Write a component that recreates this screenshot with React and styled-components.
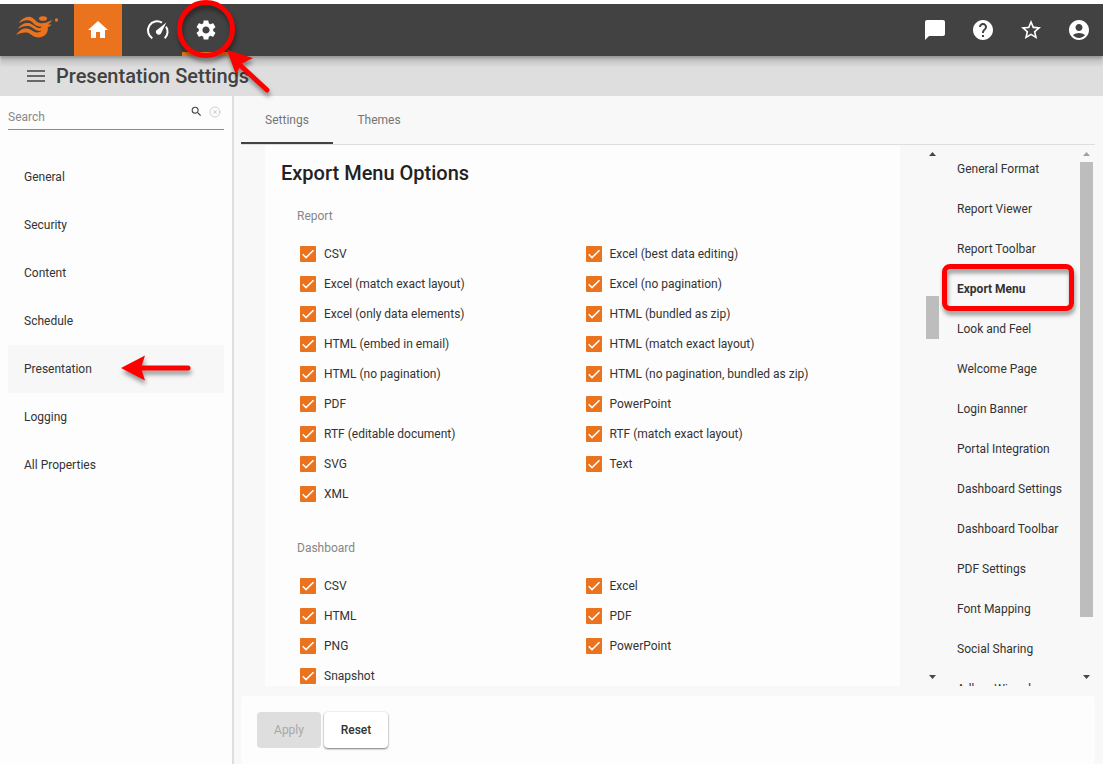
import React from "react";
import styled, { createGlobalStyle, css } from "styled-components";
import {
  MdHome, MdSettings, MdChatBubble, MdHelp, MdStarBorder, MdAccountCircle, MdMenu, MdSearch,
} from "react-icons/md";
import { CircleX } from "lucide-react";

const GlobalStyle = createGlobalStyle`
  *, *::before, *::after { box-sizing: border-box; }
  body {
    margin: 0;
    background: #f8f8f8;
    color: #333;
    font-family: Roboto, "Liberation Sans", sans-serif;
    font-size: 12px;
    line-height: 16px;
  }
  button, input { font: inherit; color: inherit; }
  button { border: 0; padding: 0; background: none; cursor: pointer; }
  ul { list-style: none; margin: 0; padding: 0; }
  h1, h2, h3 { margin: 0; font-weight: 500; }
  a { color: inherit; text-decoration: none; }
`;

const Page = styled.div`
  display: flex;
  flex-direction: column;
  height: 100vh;
  border-top: 4px solid #fff;
`;

const TopBar = styled.header`
  position: relative;
  z-index: 1;
  display: flex;
  flex: none;
  height: 52px;
  background: #424242;
  color: #fff;
  box-shadow: 0 2px 2px rgba(0, 0, 0, 0.14), 0 4px 3px rgba(0, 0, 0, 0.12), 0 9px 3px rgba(0, 0, 0, 0.08);
`;

const Brand = styled.a`
  display: flex;
  align-items: center;
  width: 74px;
  padding: 0 0 8px 16px;
`;

const BarLink = styled.a`
  position: relative;
  display: grid;
  place-items: center;
  width: 48px;
  font-size: 24px;
  ${(p) => p.$home && css`
    margin-right: 12px;
    background: #eb731d;
  `}
  ${(p) => p.$current && css`box-shadow: inset 0 -4px #eb731d;`}
`;

const BarActions = styled.div`
  display: flex;
  margin-left: auto;
`;

const BarButton = styled.button`
  display: grid;
  place-items: center;
  width: 48px;
  font-size: 24px;
`;

const TitleBar = styled.div`
  display: flex;
  flex: none;
  align-items: center;
  gap: 8px;
  height: 40px;
  padding: 0 24px;
  background: #dedede;
  color: #424242;
`;

const MenuButton = styled.button`
  display: flex;
  color: #686868;
  font-size: 24px;
`;

const PageTitle = styled.h1`
  font-size: 20px;
  line-height: 24px;
`;

const Body = styled.div`
  display: flex;
  flex: 1;
  min-height: 0;
`;

const Sidebar = styled.aside`
  flex: none;
  width: 234px;
  padding: 0 8px;
  background: #fdfdfd;
  border-right: 2px solid #dedede;
`;

const SearchBox = styled.label`
  display: flex;
  align-items: center;
  gap: 6px;
  height: 34px;
  padding-right: 3px;
  border-bottom: 1px solid #8a8a8a;
`;

const SearchInput = styled.input`
  flex: 1;
  min-width: 0;
  height: 16px;
  margin-top: 8px;
  padding: 0;
  border: 0;
  outline: 0;
  background: none;
  &::placeholder { color: #8a8a8a; opacity: 1; }
`;

const SearchAction = styled.button`
  display: flex;
  margin-bottom: 2px;
  color: ${(p) => (p.$muted ? "#bdbdbd" : "#424242")};
`;

const SideList = styled.ul`
  margin-top: 23px;
`;

const SideLink = styled.a`
  position: relative;
  display: flex;
  align-items: center;
  height: 48px;
  padding: 0 16px;
  background: ${(p) => (p.$current ? "#f7f7f7" : "none")};
`;

const Main = styled.main`
  display: flex;
  flex: 1;
  flex-direction: column;
  min-width: 0;
  padding: 0 8px 0 7px;
`;

const Tabs = styled.div`
  display: flex;
  flex: none;
  height: 49px;
  border-bottom: 1px solid #dedede;
`;

const Tab = styled.button`
  width: 92px;
  height: 48px;
  color: #757575;
  box-shadow: ${(p) => (p.$current ? "inset 0 -2px #424242" : "none")};
`;

const Content = styled.div`
  display: flex;
  flex: 1;
  min-height: 0;
  padding-right: 2px;
`;

const Panel = styled.section`
  flex: 1;
  min-width: 0;
  margin: 0 26px 0 24px;
  padding: 16px;
  overflow: hidden;
  border-radius: 4px 4px 0 0;
  background: #fdfdfd;
`;

const PanelTitle = styled.h2`
  font-size: 20px;
  line-height: 24px;
  color: #222;
`;

const Group = styled.fieldset`
  margin: 0;
  padding: 23px 16px 8px;
  border: 0;
  min-width: 0;
`;

const GroupTitle = styled.legend`
  float: left;
  width: 100%;
  margin-bottom: 15px;
  padding: 0;
  color: #868686;
`;

const Options = styled.div`
  clear: both;
  display: grid;
  grid-template-columns: 1fr 1fr;
`;

const Option = styled.label`
  display: flex;
  align-items: center;
  gap: 8px;
  height: 30px;
  padding-left: 3px;
`;

const TickFrame = styled.span`
  display: grid;
  width: 16px;
  height: 16px;
  > * { grid-area: 1 / 1; }
  svg { pointer-events: none; visibility: hidden; }
  input:checked + svg { visibility: visible; }
`;

const TickInput = styled.input`
  appearance: none;
  width: 16px;
  height: 16px;
  margin: 0;
  border: 2px solid #757575;
  border-radius: 1px;
  &:checked { border-color: #eb731d; background: #eb731d; }
`;

const ScrollColumn = styled.div`
  display: flex;
  flex: none;
  flex-direction: column;
  width: 13px;
  padding: 7px 0;
`;

const ScrollArrow = styled.span`
  align-self: center;
  width: 7px;
  height: 4px;
  background: ${(p) => (p.$dim ? "#a0a0a0" : "#484848")};
  clip-path: ${(p) => (p.$down ? "polygon(0 0, 100% 0, 50% 100%)" : "polygon(50% 0, 100% 100%, 0 100%)")};
`;

const ScrollTrack = styled.div`
  display: grid;
  flex: 1;
  grid-template-rows: ${(p) => p.$rows};
  margin: 6px 0 5px;
`;

const ScrollThumb = styled.div`
  grid-row: 2;
  background: #bdbdbd;
`;

const SectionNav = styled.nav`
  flex: none;
  width: 141px;
  padding-top: 4px;
  overflow: hidden;
`;

const SectionLink = styled.a`
  position: relative;
  display: flex;
  align-items: center;
  height: 40px;
  padding-left: 18px;
  white-space: nowrap;
  font-weight: ${(p) => (p.$current ? 700 : 400)};
`;

const Footer = styled.footer`
  display: flex;
  flex: none;
  gap: 3px;
  margin-top: 10px;
  padding: 16px;
  border-radius: 4px;
  background: #fdfdfd;
`;

const ActionButton = styled.button`
  width: 64px;
  height: 36px;
  border-radius: 4px;
  font-weight: 500;
  background: #fff;
  box-shadow: 0 1px 2px rgba(0, 0, 0, 0.5), 0 0 2px rgba(0, 0, 0, 0.12);
  &:disabled { background: #dedede; color: #a8a8a8; font-weight: 400; box-shadow: none; }
`;

const markShadow = "drop-shadow(1px 4px 2px rgba(0, 0, 0, 0.4))";

const RingMark = styled.span`
  position: absolute;
  top: -4px;
  left: -5px;
  width: 58px;
  height: 58px;
  border: 5px solid #f00;
  border-radius: 50%;
  filter: ${markShadow};
  pointer-events: none;
`;

const BoxMark = styled.span`
  position: absolute;
  inset: -5px 6px -2px 3px;
  border: 5px solid #f00;
  border-radius: 8px;
  filter: ${markShadow};
  pointer-events: none;
`;

const ArrowMark = styled.svg`
  position: absolute;
  top: ${(p) => p.$top}px;
  left: ${(p) => p.$left}px;
  overflow: visible;
  filter: ${markShadow};
  pointer-events: none;
`;

function BrandLogo() {
  return (
    <svg width="44" height="26" viewBox="0 0 44 26" fill="#eb731d">
      <path d="M2.500 10.500C6 5 11 3 15 4.200c4 1.300 5 5.300 9.500 6 4 .4 8-1 11.500-3.200-.5 2-2.500 3.300-4 4.300 1 .5 2 .3 3.500.2-1 1.500-2.500 2.200-3.800 2.800.9 5.200-2.700 10.200-9.200 10.200-6 0-7.500-4.500-12-5-4-.3-7 .8-10.500 2.500C3.500 17 7 15.200 11 15.500c4 .3 6 3.800 10 4 2 0 3.500-.5 4.500-1.700-7 1-8-4.300-13.500-4.800-3.500-.3-7 .8-10 2.800 2.500-4.300 6.500-6.300 10.500-5.800 4.500.6 6.500 4.500 10.500 5 1.300 0 2.300-.3 3.200-1.200C18.500 14.500 17 8 12.500 7.300 9 6.700 5.500 8.300 2.500 10.500z" />
      <ellipse cx="27" cy="5.500" rx="4" ry="2.300" />
      <circle cx="40.500" cy="7" r="1.700" />
    </svg>
  );
}

function GaugeIcon() {
  return (
    <svg width="24" height="24" viewBox="0 0 24 24" fill="none">
      <path d="M6.300 20.300A9 9 0 0 1 16 4.700M20 8.600A9 9 0 0 1 18.700 20.300" stroke="currentColor" strokeWidth="2" />
      <path d="M20.300 4.500l-5.300 11a2.800 2.800 0 0 1-4.700-3z" fill="currentColor" />
    </svg>
  );
}

function Checkbox({ label }) {
  return (
    <Option>
      <TickFrame>
        <TickInput type="checkbox" defaultChecked />
        <svg width="16" height="16" viewBox="0 0 16 16" fill="none" stroke="#fff" strokeWidth="1.500">
          <path d="M2.700 8.300l3.300 3.300 7.500-7.400" />
        </svg>
      </TickFrame>
      {label}
    </Option>
  );
}

function CheckGroup({ title, items }) {
  return (
    <Group>
      <GroupTitle>{title}</GroupTitle>
      <Options>
        {items.map((item) => <Checkbox key={item} label={item} />)}
      </Options>
    </Group>
  );
}

function Scrollbar({ rows, dimTop }) {
  return (
    <ScrollColumn aria-hidden="true">
      <ScrollArrow $dim={dimTop} />
      <ScrollTrack $rows={rows}><ScrollThumb /></ScrollTrack>
      <ScrollArrow $down />
    </ScrollColumn>
  );
}

const sideItems = ["General", "Security", "Content", "Schedule", "Presentation", "Logging", "All Properties"];

const reportFormats = [
  "CSV", "Excel (best data editing)",
  "Excel (match exact layout)", "Excel (no pagination)",
  "Excel (only data elements)", "HTML (bundled as zip)",
  "HTML (embed in email)", "HTML (match exact layout)",
  "HTML (no pagination)", "HTML (no pagination, bundled as zip)",
  "PDF", "PowerPoint",
  "RTF (editable document)", "RTF (match exact layout)",
  "SVG", "Text",
  "XML",
];

const dashboardFormats = ["CSV", "Excel", "HTML", "PDF", "PNG", "PowerPoint", "Snapshot"];

const sections = [
  "General Format", "Report Viewer", "Report Toolbar", "Export Menu", "Look and Feel",
  "Welcome Page", "Login Banner", "Portal Integration", "Dashboard Settings",
  "Dashboard Toolbar", "PDF Settings", "Font Mapping", "Social Sharing", "Adhoc Wizard",
];

export default function App() {
  return (
    <>
      <GlobalStyle />
      <Page>
        <TopBar>
          <Brand href="#" aria-label="Start page"><BrandLogo /></Brand>
          <BarLink href="#home" aria-label="Home" $home><MdHome /></BarLink>
          <BarLink href="#monitor" aria-label="Monitoring"><GaugeIcon /></BarLink>
          <BarLink href="#settings" aria-label="Settings" $current>
            <MdSettings />
            <RingMark />
            <ArrowMark $top={46} $left={45} width="44" height="46" viewBox="0 0 44 46">
              <path d="M14 16L40 40" stroke="#f00" strokeWidth="5" strokeLinecap="round" />
              <path d="M0 0l26 8-12 6-5 11z" fill="#f00" />
            </ArrowMark>
          </BarLink>
          <BarActions>
            <BarButton aria-label="Messages"><MdChatBubble /></BarButton>
            <BarButton aria-label="Help"><MdHelp /></BarButton>
            <BarButton aria-label="Favorites"><MdStarBorder /></BarButton>
            <BarButton aria-label="Account"><MdAccountCircle /></BarButton>
          </BarActions>
        </TopBar>
        <TitleBar>
          <MenuButton aria-label="Toggle menu"><MdMenu /></MenuButton>
          <PageTitle>Presentation Settings</PageTitle>
        </TitleBar>
        <Body>
          <Sidebar>
            <SearchBox>
              <SearchInput type="text" placeholder="Search" aria-label="Search" />
              <SearchAction aria-label="Find"><MdSearch size={13} /></SearchAction>
              <SearchAction aria-label="Clear" $muted><CircleX size={12} strokeWidth={1.5} /></SearchAction>
            </SearchBox>
            <SideList>
              {sideItems.map((item) => (
                <li key={item}>
                  <SideLink href="#" $current={item === "Presentation"}>
                    {item}
                    {item === "Presentation" && (
                      <ArrowMark $top={10} $left={113} width="70" height="26" viewBox="0 0 70 26">
                        <path d="M20 13H67" stroke="#f00" strokeWidth="5" strokeLinecap="round" />
                        <path d="M0 13L24 0.500 20 13l4 12.500z" fill="#f00" />
                      </ArrowMark>
                    )}
                  </SideLink>
                </li>
              ))}
            </SideList>
          </Sidebar>
          <Main>
            <Tabs role="tablist">
              <Tab role="tab" aria-selected="true" $current>Settings</Tab>
              <Tab role="tab" aria-selected="false">Themes</Tab>
            </Tabs>
            <Content>
              <Panel>
                <PanelTitle>Export Menu Options</PanelTitle>
                <CheckGroup title="Report" items={reportFormats} />
                <CheckGroup title="Dashboard" items={dashboardFormats} />
              </Panel>
              <Scrollbar rows="134fr 43fr 330fr" />
              <SectionNav>
                {sections.map((item) => (
                  <SectionLink key={item} href="#" $current={item === "Export Menu"}>
                    {item}
                    {item === "Export Menu" && <BoxMark />}
                  </SectionLink>
                ))}
              </SectionNav>
              <Scrollbar rows="0fr 454fr 53fr" dimTop />
            </Content>
            <Footer>
              <ActionButton disabled>Apply</ActionButton>
              <ActionButton>Reset</ActionButton>
            </Footer>
          </Main>
        </Body>
      </Page>
    </>
  );
}
